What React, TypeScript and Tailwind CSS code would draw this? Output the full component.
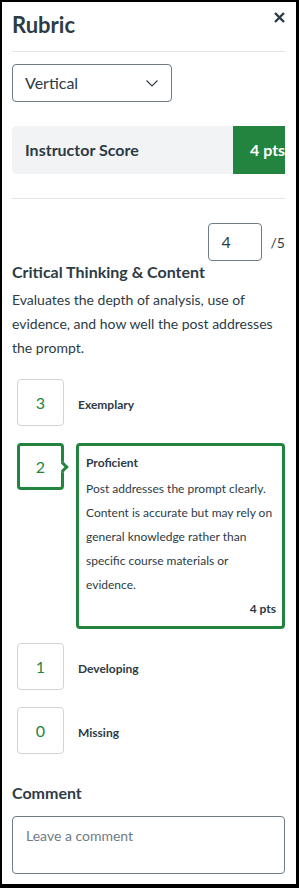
import React from "react";

function RatingBox({ n, selected }: { n: number; selected?: boolean }) {
  return (
    <div
      className={
        "relative shrink-0 w-[47px] h-[47px] rounded-[4px] flex items-center justify-center bg-white " +
        (selected ? "border-[3px] border-[#23843f]" : "border border-[#cfd4d8]")
      }
    >
      <span className="text-[16px] leading-none text-[#24843f]">{n}</span>
      {selected && (
        <span className="absolute right-[-6px] top-1/2 -translate-y-1/2 w-[8px] h-[8px] rotate-45 bg-white border-t-[3px] border-r-[3px] border-[#23843f]" />
      )}
    </div>
  );
}

export default function App() {
  return (
    <div
      className="w-[299px] h-[888px] overflow-hidden bg-white border-l-2 border-t-2 border-r-[3px] border-b-[4px] border-black text-[#2d3b45]"
      style={{ fontFamily: "Lato, 'Noto Sans', sans-serif" }}
    >
      <div className="pl-[10px] pr-[11px] flex flex-col">
        {/* header */}
        <div className="pt-[9px] flex items-start justify-between">
          <h1 className="text-[22px] leading-[28px] font-bold">Rubric</h1>
          <svg width="11" height="11" viewBox="0 0 11 11" className="mt-[1px]">
            <path d="M1 1 L10 10 M10 1 L1 10" stroke="#2d3b45" strokeWidth="2.4" strokeLinecap="butt" />
          </svg>
        </div>
        <div className="mt-[12px] h-px bg-[#e3e6e8]" />

        {/* select */}
        <div className="mt-[12px] w-[160px] h-[38px] border border-[#6f7c85] rounded-[4px] flex items-center justify-between pl-[12px] pr-[13px]">
          <span className="text-[16px]">Vertical</span>
          <svg width="12" height="7" viewBox="0 0 12 7">
            <path d="M0.5 0.5 L6 6 L11.5 0.5" stroke="#2d3b45" strokeWidth="1.1" fill="none" />
          </svg>
        </div>

        {/* instructor score */}
        <div className="mt-[24px] h-[48px] flex overflow-hidden">
          <div className="flex-1 bg-[#f2f3f4] rounded-l-[5px] flex items-center pl-[13px]">
            <span className="text-[16px] font-bold">Instructor Score</span>
          </div>
          <div className="w-[52px] bg-[#23843f] flex items-center pl-[17px] overflow-hidden whitespace-nowrap">
            <span className="text-[16px] font-bold text-white">4 pts</span>
          </div>
        </div>
        <div className="mt-[24px] h-px bg-[#e3e6e8]" />

        {/* points input */}
        <div className="mt-[24px] flex items-center justify-end gap-[9px]">
          <div className="w-[54px] h-[38px] border border-[#6f7c85] rounded-[4px] flex items-center pl-[13px]">
            <span className="text-[16px]">4</span>
          </div>
          <span className="text-[14px]">/5</span>
        </div>

        <h2 className="mt-[-1px] text-[16px] leading-[24px] font-bold">Critical Thinking &amp; Content</h2>
        <p className="mt-[4px] text-[14px] leading-[24px]">
          Evaluates the depth of analysis, use of evidence, and how well the post addresses the prompt.
        </p>

        {/* ratings */}
        <div className="mt-[19px] pl-[5px] flex flex-col">
          <div className="flex items-center">
            <RatingBox n={3} />
            <span className="ml-[14px] mt-[4px] text-[12px] font-bold">Exemplary</span>
          </div>

          <div className="mt-[17px] flex items-start">
            <RatingBox n={2} selected />
            <div className="ml-[12px] flex-1 border-[3px] border-[#23843f] rounded-[4px] pt-[8px] pb-[5px] pl-[7px] pr-[6px]">
              <div className="text-[12px] leading-[18px] font-bold">Proficient</div>
              <p className="mt-[5px] text-[12px] leading-[24px]">
                Post addresses the prompt clearly. Content is accurate but may rely on general knowledge rather than specific course materials or evidence.
              </p>
              <div className="text-[12px] leading-[24px] font-bold text-right">4 pts</div>
            </div>
          </div>

          <div className="mt-[14px] flex items-center">
            <RatingBox n={1} />
            <span className="ml-[14px] mt-[4px] text-[12px] font-bold">Developing</span>
          </div>

          <div className="mt-[17px] flex items-center">
            <RatingBox n={0} />
            <span className="ml-[14px] mt-[4px] text-[12px] font-bold">Missing</span>
          </div>
        </div>

        {/* comment */}
        <h3 className="mt-[27px] text-[16px] leading-[24px] font-bold">Comment</h3>
        <div className="mt-[11px] h-[58px] border border-[#6f7c85] rounded-[4px] pl-[13px] pt-[6px]">
          <span className="text-[14px] leading-[20px] text-[#6f7c85]">Leave a comment</span>
        </div>
      </div>
    </div>
  );
}
